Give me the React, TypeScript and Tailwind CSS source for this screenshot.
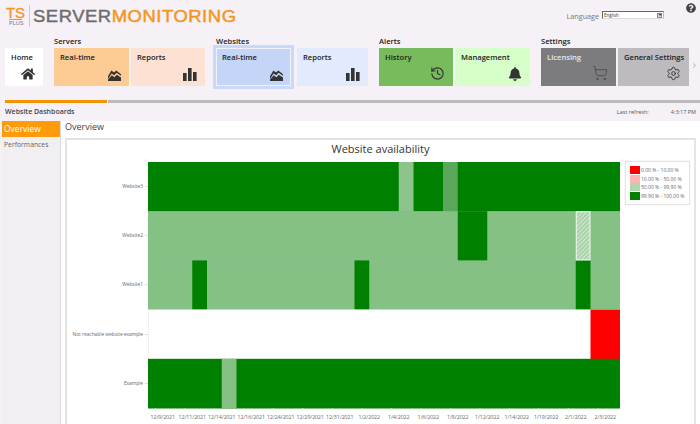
import React from "react";
import { FaHome, FaBell, FaQuestionCircle } from "react-icons/fa";
import { ShoppingCart, Settings, History, ChevronRight } from "lucide-react";

const font = { fontFamily: '"Open Sans", "Liberation Sans", sans-serif' };

function AreaIcon() {
  return (
    <svg width="13" height="11" viewBox="0 0 13 11" fill="#333">
      <path d="M0 6.2 3.4.6 6 2.6 8.2.4 13 4.2v1.6L8.6 2.8 6.2 5.2 3.6 3.4 0 9z" />
      <path d="M0 11V9.6L3.8 5.2 6.4 7.2 8.8 4.8 13 7.6V11z" />
    </svg>
  );
}

function BarsIcon() {
  return (
    <svg width="14" height="13" viewBox="0 0 14 13" fill="#333">
      <rect x="0" y="5" width="3.6" height="8" />
      <rect x="5" y="0" width="3.6" height="13" />
      <rect x="10" y="4" width="3.6" height="9" />
    </svg>
  );
}

function Tile({
  label,
  icon,
  bg,
  w,
  text = "text-[#222]",
}: {
  label: string;
  icon: React.ReactNode;
  bg: string;
  w: string;
  text?: string;
}) {
  return (
    <div className={`${bg} ${w} ${text} h-[38px] flex flex-col justify-between pl-[6px] pr-[8px] pt-[3px] pb-[5px]`}>
      <div className="text-[7.6px] leading-[12px] font-semibold whitespace-nowrap">{label}</div>
      <div className="flex justify-end h-[14px] items-end">{icon}</div>
    </div>
  );
}

function Group({ title, children }: { title: string; children: React.ReactNode }) {
  return (
    <div className="flex flex-col">
      <div className="text-[7.6px] leading-[12px] h-[12px] font-semibold text-[#222] mb-[1px]">{title}</div>
      <div className="flex gap-[2px]">{children}</div>
    </div>
  );
}

const DARK = "#008000";
const LIGHT = "#85c085";
const MID = "#5aa65a";
const CW = 14.75;

type Cell = [number, number, string];
const rows: { base: string; cells: Cell[] }[] = [
  { base: DARK, cells: [[17, 1, "#8cc48c"], [20, 1, MID]] },
  { base: LIGHT, cells: [[21, 2, DARK]] },
  { base: LIGHT, cells: [[3, 1, DARK], [14, 1, DARK], [29, 1, DARK]] },
  { base: "#ffffff", cells: [[30, 2, "#ff0000"]] },
  { base: DARK, cells: [[5, 1, LIGHT]] },
];

const yLabels = ["Website3", "Website2", "Website1", "Not reachable website example", "Example"];
const xLabels = [
  "12/9/2021", "12/11/2021", "12/14/2021", "12/16/2021", "12/24/2021", "12/29/2021", "12/31/2021", "1/2/2022",
  "1/4/2022", "1/6/2022", "1/8/2022", "1/12/2022", "1/14/2022", "1/19/2022", "2/1/2022", "2/3/2022",
];

function Heatmap() {
  const RH = 49.2;
  return (
    <svg width="472" height="250" viewBox="0 0 472 250" className="block">
      <defs>
        <pattern id="hatch" width="3" height="3" patternUnits="userSpaceOnUse" patternTransform="rotate(45)">
          <rect width="3" height="3" fill="#9fce9f" />
          <rect width="1.3" height="3" fill="#d4e8d4" />
        </pattern>
      </defs>
      {rows.map((r, i) => (
        <g key={i}>
          <rect x="0" y={i * RH} width="472" height={RH + 0.5} fill={r.base} />
          {r.cells.map(([c, n, col], j) => (
            <rect key={j} x={c * CW} y={i * RH} width={n * CW} height={RH + 0.5} fill={col} />
          ))}
        </g>
      ))}
      <rect x={29 * CW + 0.5} y={RH + 0.5} width={CW - 1} height={RH - 1} fill="url(#hatch)" stroke="#f4f9f4" strokeWidth="1" />
      <line x1="0" y1={3 * RH} x2="442" y2={3 * RH} stroke="#cfe5cf" strokeWidth="0.5" />
      <line x1="0" y1="147" x2="0" y2="197" stroke="#dddddd" strokeWidth="0.8" />
      {xLabels.map((_, i) => (
        <line key={i} x1={7.4 + i * 29.5} x2={7.4 + i * 29.5} y1="246" y2="250" stroke="#ddeedd" strokeWidth="0.6" />
      ))}
    </svg>
  );
}

function Legend() {
  const items = [
    ["#ff0000", "0.00 % - 10.00 %"],
    ["#ffb3b3", "10.00 % - 50.00 %"],
    ["#b0d6b0", "50.00 % - 99.90 %"],
    ["#008000", "99.90 % - 100.00 %"],
  ];
  return (
    <div className="w-[65px] h-[44px] border border-[#e4e4e4] bg-white flex flex-col justify-center gap-[0.5px] pl-[4px] shadow-[0_0_1px_#ddd]">
      {items.map(([c, t]) => (
        <div key={t} className="flex items-center h-[8px]">
          <div className="w-[10px] h-[8px] shrink-0 mr-[1px]" style={{ background: c }} />
          <span className="text-[5px] leading-[8px] text-[#666] whitespace-nowrap">{t}</span>
        </div>
      ))}
    </div>
  );
}

export default function App() {
  return (
    <div className="w-[700px] h-[424px] overflow-hidden bg-[#f5f1f6] flex flex-col" style={font}>
      {/* top bar */}
      <div className="h-[32px] flex items-start pl-[4px] pr-[3px] shrink-0">
        <div className="flex items-center h-[26px] mt-[3px]">
          <div className="flex flex-col items-center w-[23px] mr-[2px]" style={{ fontFamily: '"Liberation Sans", sans-serif' }}>
            <span className="text-[15px] leading-[13px] text-[#f7941d] font-normal [-webkit-text-stroke:0.3px]">TS</span>
            <span className="text-[5.5px] leading-[6px] text-[#777] border-t border-[#f7941d] w-[13px] text-center">PLUS</span>
          </div>
          <div className="w-px h-[22px] bg-[#f4c68c] mr-[3px]" />
          <div className="text-[16.5px] leading-[26px] tracking-[0.5px] scale-x-[1.115] origin-left whitespace-nowrap [-webkit-text-stroke:0.45px]" style={{ fontFamily: '"Liberation Sans", sans-serif' }}>
            <span className="text-[#6d6d6f]">SERVER</span>
            <span className="text-[#f7941d]">MONITORING</span>
          </div>
        </div>
        <div className="ml-auto flex items-start">
          <span className="text-[7.2px] leading-[12px] text-[#777] mt-[10px] mr-[3px]">Language</span>
          <div className="w-[62px] h-[8px] mt-[11px] mr-[22px] border border-[#666] border-r-[#bbb] border-b-[#ddd] bg-white flex items-center justify-between">
            <span className="text-[4.5px] leading-[6px] text-[#333] pl-[1px]">English</span>
            <span className="w-[5px] h-[5px] mr-px bg-[#ddd] border border-[#888] flex items-center justify-center">
              <span className="block w-0 h-0 border-x-[1.5px] border-x-transparent border-t-[2px] border-t-black" />
            </span>
          </div>
          <FaQuestionCircle className="text-[#444] mt-[3px] mr-[1px]" size={10} />
        </div>
      </div>

      {/* nav */}
      <div className="h-[68px] flex items-start shrink-0 pl-[5px] pt-[3px] relative">
        <div className="mt-[13px] mr-[11px] w-[38px] h-[38px] bg-white flex flex-col justify-between pl-[6px] pr-[8px] pt-[3px] pb-[5px]">
          <div className="text-[7.6px] leading-[12px] font-semibold text-[#222]">Home</div>
          <div className="flex justify-end"><FaHome size={14} className="text-[#333]" /></div>
        </div>
        <div className="mr-[11px]">
          <Group title="Servers">
            <Tile label="Real-time" bg="bg-[#fdcb94]" w="w-[75px]" icon={<AreaIcon />} />
            <Tile label="Reports" bg="bg-[#fde2d3]" w="w-[74px]" icon={<BarsIcon />} />
          </Group>
        </div>
        <div className="mr-[11px]">
          <Group title="Websites">
            <div className="bg-[#c8daf8] w-[81px] h-[44px] -my-[3px] -ml-[3px] mr-[1px] p-[3px]">
              <div className="h-[38px] border border-[#edf2fc] bg-[#c4d5f8] text-[#222] flex flex-col justify-between pl-[5px] pr-[7px] pt-[2px] pb-[4px]">
                <div className="text-[7.6px] leading-[12px] font-semibold">Real-time</div>
                <div className="flex justify-end h-[14px] items-end"><AreaIcon /></div>
              </div>
            </div>
            <Tile label="Reports" bg="bg-[#e1ebfd]" w="w-[71px]" icon={<BarsIcon />} />
          </Group>
        </div>
        <div className="mr-[11px]">
          <Group title="Alerts">
            <Tile label="History" bg="bg-[#78bb5c]" w="w-[74px]" icon={<History size={15} strokeWidth={1.8} className="text-[#333]" />} />
            <Tile label="Management" bg="bg-[#d6ffc9]" w="w-[75px]" icon={<FaBell size={14} className="text-[#333]" />} />
          </Group>
        </div>
        <div>
          <Group title="Settings">
            <Tile label="Licensing" bg="bg-[#7c7b7d]" w="w-[75px]" text="text-[#e8e8e8]" icon={<ShoppingCart size={16} strokeWidth={1.3} className="text-[#4a4a4a]" />} />
            <Tile label="General Settings" bg="bg-[#bdbbbd]" w="w-[71px]" icon={<Settings size={15} strokeWidth={1.5} className="text-[#333]" />} />
          </Group>
        </div>
        <ChevronRight size={7} className="absolute right-[2px] top-[30px] text-[#777]" />
      </div>

      {/* progress */}
      <div className="h-[3px] flex shrink-0 pl-[5px]">
        <div className="w-[102px] bg-[#f39200]" />
        <div className="flex-1 ml-px bg-[#bdbabd]" />
      </div>

      {/* title row */}
      <div className="h-[18px] flex items-center justify-between shrink-0 pl-[5px] pr-[4px]">
        <span className="text-[7px] leading-[12px] font-semibold text-[#444]">Website Dashboards</span>
        <div className="flex text-[5.5px] leading-[8px] text-[#555]">
          <span className="w-[54px]">Last refresh:</span>
          <span>4:3:17 PM</span>
        </div>
      </div>

      {/* body */}
      <div className="flex-1 flex min-h-0 pl-[2px]">
        <div className="w-[59px] shrink-0 border-r border-[#dcdadc] bg-[#f2eff2]">
          <div className="h-[16px] bg-[#ff9a0a] text-white text-[8.5px] leading-[16px] pl-[2px]">Overview</div>
          <div className="text-[6.8px] leading-[14px] mt-px pl-[2px] text-[#666]">Performances</div>
        </div>
        <div className="flex-1 bg-white pl-[4px] min-w-0">
          <div className="h-[17px] text-[9px] leading-[12px] text-[#444]">Overview</div>
          <div className="w-[631px] h-[300px] border-2 border-[#e4e4e4] border-b-0 flex flex-col">
            <div className="h-[22px] text-center text-[11px] leading-[18px] text-[#333]">Website availability</div>
            <div className="flex">
              <div className="w-[81px] shrink-0">
                {yLabels.map((l) => (
                  <div key={l} className="h-[49.2px] flex items-center justify-end">
                    <span className="text-[4.8px] text-[#666] whitespace-nowrap">{l}</span>
                    <span className="w-[3px] h-px bg-[#ddd] ml-[2px]" />
                  </div>
                ))}
              </div>
              <div className="w-[472px] shrink-0">
                <Heatmap />
                <div className="flex h-[12px] w-[472px] mt-[1px]">
                  {xLabels.map((l) => (
                    <span key={l} className="w-[29.5px] shrink-0 flex justify-center text-[5.2px] leading-[8px] text-[#666] whitespace-nowrap">{l}</span>
                  ))}
                </div>
              </div>
              <div className="ml-[5px] -mt-px"><Legend /></div>
            </div>
          </div>
        </div>
      </div>
    </div>
  );
}
